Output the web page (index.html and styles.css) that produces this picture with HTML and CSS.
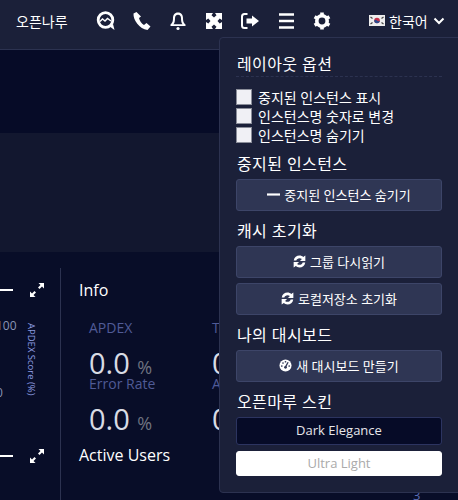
FILE: index.html
```html
<!DOCTYPE html>
<html lang="ko">

<head>
    <meta charset="UTF-8">
    <title>OpenMaru</title>
    <link rel="stylesheet" href="styles.css">
</head>

<body>
    <header class="topbar">
        <span class="brand">오픈나루</span>
        <nav class="top-icons">
            <svg class="icon" viewBox="0 0 20 20"><circle cx="9.500" cy="9" r="7.300" fill="none" stroke="#fff" stroke-width="2.800"/><path d="M13 15l5.500 4-1.500-6z" fill="#fff"/><path d="M4 10.500l2.500-2.500 2.500 2 2.500-2.500 3.500 2.500" fill="none" stroke="#fff" stroke-width="1.400"/></svg>
            <svg class="icon" viewBox="0 0 20 20"><path d="M4.500 1L1.500 2.500C1 9 7.500 18 15.500 19l3-3.500-4-3.500-2.500 2C9.500 12.500 7.500 9.500 7 7l2-1.500z" fill="#fff"/></svg>
            <svg class="icon" viewBox="0 0 20 20"><path d="M10 1.500c-3.500 0-5 2.500-5 5.500 0 4-1 5-2.500 6.500v1.500h15v-1.500C16 12 15 11 15 7c0-3-1.500-5.500-5-5.500zM10 3.700c2 0 3 1.500 3 3.500 0 3 .5 4.800 1.500 6h-9c1-1.200 1.500-3 1.500-6 0-2 1-3.500 3-3.500z" fill="#fff"/><circle cx="10" cy="17.500" r="1.600" fill="#fff"/></svg>
            <svg class="icon" viewBox="0 0 20 20"><path d="M2 2h7L7.500 4.300 10 6.500l2.500-2.200L11 2h7v7l-2.300-1.500L13.500 10l2.200 2.500L18 11v7h-7l1.500-2.300L10 13.500l-2.500 2.200L9 18H2v-7l2.300 1.500L6.500 10 4.300 7.500 2 9z" fill="#fff"/></svg>
            <svg class="icon" viewBox="0 0 20 20"><path d="M7.500 3H4.500C3 3 2 4 2 5.500v9C2 16 3 17 4.500 17h3" fill="none" stroke="#fff" stroke-width="2"/><path d="M12 4.500l7 5.500-7 5.500V12.500H6.500v-5H12z" fill="#fff"/></svg>
            <svg class="icon" viewBox="0 0 20 20"><path d="M3 3.500h15M3 10h15M3 16.500h15" stroke="#fff" stroke-width="2.500"/></svg>
            <svg class="icon" viewBox="0 0 20 20"><circle cx="10" cy="10" r="5.200" fill="none" stroke="#fff" stroke-width="3.600"/><path d="M10 1.500v3M10 15.500v3M2.600 5.750l2.600 1.500M14.800 12.750l2.600 1.500M2.600 14.250l2.600-1.500M14.800 7.250l2.600-1.500" stroke="#fff" stroke-width="3.600"/></svg>
        </nav>
        <span class="lang">
            <svg class="flag" viewBox="0 0 16 11"><rect width="16" height="11" fill="#eee"/><circle cx="8" cy="5.500" r="2.800" fill="#c8324a"/><path d="M5.200 5.500a2.800 2.800 0 0 0 5.600 0c-.7 1-2 1-2.800 0s-2.100-1-2.800 0z" fill="#2a4a8c"/><path d="M1.500 2l2 1.500M12.500 3.500l2-1.500M1.500 9l2-1.500M12.500 7.500l2 1.500" stroke="#444" stroke-width="1.200"/></svg>
            <span>한국어</span>
            <svg class="chevron" viewBox="0 0 12 8"><path d="M1.500 1.500L6 6l4.500-4.500" fill="none" stroke="#fff" stroke-width="2"/></svg>
        </span>
    </header>

    <main class="content">
        <div class="band"></div>
        <div class="band band-light"></div>
        <div class="panels">
            <section class="chart-side">
                <div class="chart-tools">
                    <span class="dash"></span>
                    <svg class="expand" viewBox="0 0 16 16"><path d="M9.500 1H15v5.500l-2-2-2.500 2.500L9 5.500 11.500 3zM1 9.500V15h5.500l-2-2L7 10.500 5.500 9 3 11.500z" fill="#fff"/></svg>
                </div>
                <div class="axis">
                    <div class="ticks"><span>100</span><span>0</span></div>
                    <span class="axis-title">APDEX Score (%)</span>
                </div>
                <div class="chart-tools tools-low">
                    <span class="dash"></span>
                    <svg class="expand" viewBox="0 0 16 16"><path d="M9.500 1H15v5.500l-2-2-2.500 2.500L9 5.500 11.500 3zM1 9.500V15h5.500l-2-2L7 10.500 5.500 9 3 11.500z" fill="#fff"/></svg>
                </div>
            </section>
            <section class="info">
                <h3>Info</h3>
                <div class="metrics">
                    <div class="metric-col">
                        <div class="label">APDEX</div>
                        <div class="value">0.0 <small>%</small></div>
                        <div class="label">Error Rate</div>
                        <div class="value">0.0 <small>%</small></div>
                    </div>
                    <div class="metric-col">
                        <div class="label">TPS</div>
                        <div class="value">0.0</div>
                        <div class="label">Active</div>
                        <div class="value">0.0</div>
                    </div>
                </div>
                <h3>Active Users</h3>
            </section>
        </div>
        <span class="peek">3</span>
    </main>

    <aside class="dropdown">
        <h4 class="first-title">레이아웃 옵션</h4>
        <label class="check"><span class="box"></span>중지된 인스턴스 표시</label>
        <label class="check"><span class="box"></span>인스턴스명 숫자로 변경</label>
        <label class="check"><span class="box"></span>인스턴스명 숨기기</label>

        <h4>중지된 인스턴스</h4>
        <button class="btn"><svg class="btn-icon" viewBox="0 0 12 12"><rect x="0" y="5" width="12" height="2" fill="#fff"/></svg>중지된 인스턴스 숨기기</button>

        <h4>캐시 초기화</h4>
        <button class="btn"><svg class="btn-icon" viewBox="0 0 14 14"><path d="M.8 6C1.300 2.500 4 .6 7 .6c1.600 0 3 .6 4 1.500L13.300.6v5.900H7.500l2.100-2.100C8.900 3.800 8 3.500 7 3.500 5.300 3.500 4 4.500 3.600 6zM13.200 8C12.700 11.500 10 13.400 7 13.400c-1.600 0-3-.6-4-1.500L.7 13.400V7.500h5.800L4.400 9.600c.7.600 1.600.9 2.600.9 1.700 0 3-1 3.400-2.500z" fill="#fff"/></svg>그룹 다시읽기</button>
        <button class="btn btn-next"><svg class="btn-icon" viewBox="0 0 14 14"><path d="M.8 6C1.300 2.500 4 .6 7 .6c1.600 0 3 .6 4 1.500L13.300.6v5.900H7.500l2.100-2.100C8.900 3.800 8 3.500 7 3.500 5.300 3.500 4 4.500 3.600 6zM13.200 8C12.700 11.500 10 13.400 7 13.400c-1.600 0-3-.6-4-1.500L.7 13.400V7.500h5.800L4.400 9.600c.7.600 1.600.9 2.600.9 1.700 0 3-1 3.400-2.500z" fill="#fff"/></svg>로컬저장소 초기화</button>

        <h4>나의 대시보드</h4>
        <button class="btn"><svg class="btn-icon" viewBox="0 0 14 14"><circle cx="7" cy="7" r="6.500" fill="#fff"/><path d="M7 8.500L9.800 3.500" stroke="#2f3654" stroke-width="1.400"/><circle cx="7" cy="9" r="1.500" fill="#2f3654"/><circle cx="3" cy="7.500" r=".9" fill="#2f3654"/><circle cx="4.300" cy="4.300" r=".9" fill="#2f3654"/><circle cx="7" cy="3" r=".9" fill="#2f3654"/><circle cx="11" cy="7.500" r=".9" fill="#2f3654"/></svg>새 대시보드 만들기</button>

        <h4>오픈마루 스킨</h4>
        <button class="skin skin-dark">Dark Elegance</button>
        <button class="skin skin-light">Ultra Light</button>
    </aside>
</body>

</html>
```
FILE: styles.css
```css
* {
    box-sizing: border-box;
}

body {
    margin: 0;
    height: 500px;
    overflow: hidden;
    background-color: #080d28;
    color: #fff;
    font-family: "Open Sans", "Noto Sans CJK KR", sans-serif;
    position: relative;
}

.topbar {
    display: flex;
    align-items: center;
    height: 50px;
    padding-left: 16px;
    padding-bottom: 8px;
    background-color: #1b2039;
    border-bottom: 1px solid #2c3250;
}

.brand {
    width: 80px;
    font-size: 14px;
}

.top-icons {
    display: flex;
    gap: 16px;
}

.icon {
    width: 20px;
    height: 20px;
}

.lang {
    display: flex;
    align-items: center;
    margin-left: 37px;
    font-size: 14px;
    gap: 4px;
}

.flag {
    width: 16px;
    height: 11px;
}

.chevron {
    width: 12px;
    height: 8px;
    margin-left: 1px;
}

.content {
    position: relative;
}

.band {
    height: 83px;
    background-color: #060b27;
}

.band-light {
    height: 119px;
    background-color: #12172f;
}

.panels {
    display: flex;
    padding-top: 16px;
}

.chart-side {
    width: 61px;
    height: 232px;
    padding-top: 14px;
    border-right: 1px solid #2c3250;
}

.chart-tools {
    display: flex;
    align-items: center;
    height: 16px;
}

.tools-low {
    margin-top: 47px;
}

.dash {
    width: 13px;
    height: 2px;
    background-color: #fff;
}

.expand {
    width: 16px;
    height: 16px;
    margin-left: 16px;
}

.axis {
    display: flex;
    margin-top: 20px;
    height: 83px;
}

.ticks {
    width: 30px;
    margin-left: -4px;
    font-size: 12px;
    line-height: 16px;
    color: #8a95b5;
    display: flex;
    flex-direction: column;
    justify-content: space-between;
}

.axis-title {
    writing-mode: vertical-rl;
    margin-top: 5px;
    height: 74px;
    font-size: 9.500px;
    line-height: 10px;
    color: #8c9be0;
    white-space: nowrap;
}

.info {
    padding: 13px 0 0 18px;
    flex: 1;
}

.info h3 {
    margin: 0;
    font-size: 16px;
    font-weight: 400;
    line-height: 18px;
}

.metrics {
    display: flex;
    padding: 20px 0 0 10px;
    height: 147px;
}

.metric-col {
    width: 123px;
}

.label {
    color: #505b96;
    font-size: 14px;
    line-height: 18px;
    height: 18px;
}

.value {
    color: #d8dbe4;
    font-size: 29px;
    height: 38px;
    padding-top: 7px;
    line-height: 38px;
}

.value small {
    font-size: 18px;
    color: #6f7380;
}

.peek {
    position: absolute;
    left: 413px;
    top: 436px;
    font-size: 13px;
    line-height: 18px;
    color: #5a6ab0;
}

.dropdown {
    position: absolute;
    top: 37px;
    left: 219px;
    width: 250px;
    height: 456px;
    padding: 16px 0 0 16px;
    background-color: #1b2039;
    border: 1px solid #2c3250;
    border-radius: 4px;
}

.dropdown h4 {
    margin: 10px 0 5px;
    padding-left: 1px;
    font-size: 16px;
    font-weight: 400;
    line-height: 20px;
    letter-spacing: .4px;
}

.dropdown .first-title {
    width: 206px;
    height: 23px;
    margin: 0 0 10px;
    border-bottom: 1px dashed #2c3250;
}

.check {
    display: flex;
    align-items: center;
    gap: 6px;
    height: 19px;
    font-size: 14px;
}

.box {
    width: 16px;
    height: 16px;
    background-color: #f0f0f5;
    border: 1px solid #8a8d99;
}

.check + h4 {
    margin-top: 10px;
}

.btn {
    display: flex;
    align-items: center;
    justify-content: center;
    gap: 4px;
    width: 206px;
    height: 32px;
    padding: 0 0 2px;
    color: #fff;
    font-family: inherit;
    font-size: 13px;
    background-color: #2f3654;
    border: 1px solid #3d4568;
    border-radius: 3px;
}

.btn-next {
    margin-top: 5px;
}

.btn-icon {
    width: 13px;
    height: 13px;
}

.skin {
    display: block;
    width: 206px;
    font-family: inherit;
    font-size: 13px;
    padding: 0 0 2px;
    border-radius: 3px;
}

.skin-dark {
    height: 28px;
    margin-bottom: 6px;
    color: #e6e6ea;
    background-color: #060b27;
    border: 1px solid #2c3460;
}

.skin-light {
    height: 25px;
    color: #aaa;
    background-color: #fff;
    border: 1px solid #fff;
}
```
